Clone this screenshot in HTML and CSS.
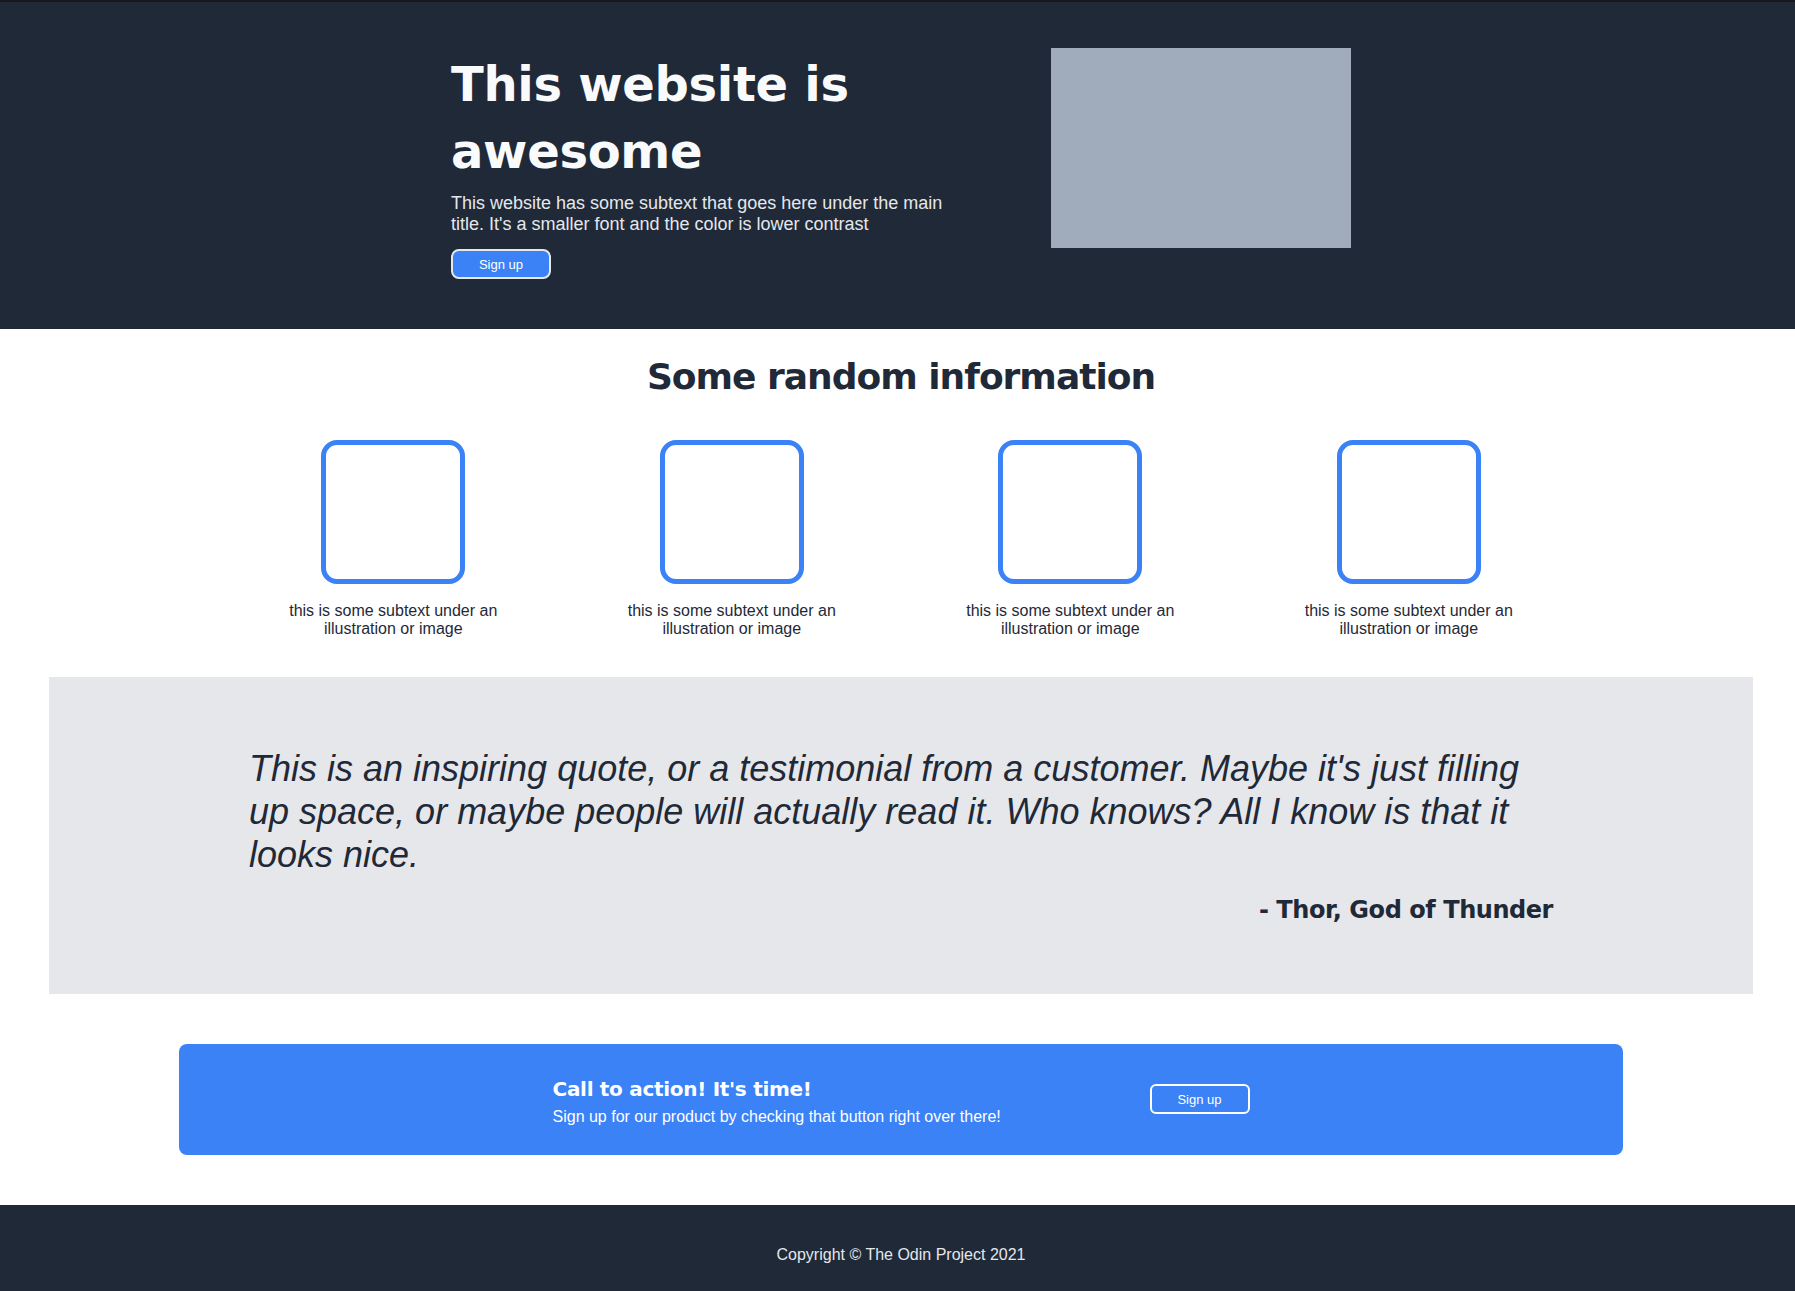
FILE: index.html
```html
<!DOCTYPE html>
<html lang="en">
<head>
<meta charset="utf-8">
<title>Landing page</title>
<link rel="stylesheet" href="styles.css">
</head>
<body>
<header class="hero">
  <div class="hero-inner">
    <div class="hero-text">
      <h1 class="hero-title">This website is awesome</h1>
      <p class="hero-sub">This website has some subtext that goes here under the main title. It's a smaller font and the color is lower contrast</p>
      <button class="btn btn-solid">Sign up</button>
    </div>
    <div class="hero-image"></div>
  </div>
</header>

<section class="info">
  <h2 class="info-title">Some random information</h2>
  <div class="cards">
    <div class="card"><div class="card-box"></div><p>this is some subtext under an illustration or image</p></div>
    <div class="card"><div class="card-box"></div><p>this is some subtext under an illustration or image</p></div>
    <div class="card"><div class="card-box"></div><p>this is some subtext under an illustration or image</p></div>
    <div class="card"><div class="card-box"></div><p>this is some subtext under an illustration or image</p></div>
  </div>
</section>

<section class="quote-section">
  <div class="quote">
    <div class="quote-inner">
      <p class="quote-text">This is an inspiring quote, or a testimonial from a customer. Maybe it's just filling up space, or maybe people will actually read it. Who knows? All I know is that it looks nice.</p>
      <p class="quote-author">- Thor, God of Thunder</p>
    </div>
  </div>
</section>

<section class="cta-section">
  <div class="cta">
    <div class="cta-inner">
      <div class="cta-text">
        <h3 class="cta-title">Call to action! It's time!</h3>
        <p class="cta-sub">Sign up for our product by checking that button right over there!</p>
      </div>
      <button class="btn btn-outline">Sign up</button>
    </div>
  </div>
</section>

<footer class="footer">Copyright © The Odin Project 2021</footer>
</body>
</html>
```

FILE: styles.css
```css
* {
  box-sizing: border-box;
}

body {
  margin: 0;
  font-family: "Liberation Sans", Arial, sans-serif;
  background: #ffffff;
  color: #1f2937;
}

.hero {
  background: #1f2937;
  border-top: 2px solid #17181d;
  height: 329px;
  padding: 46px 0 0 7px;
}

.hero-inner {
  width: 900px;
  margin: 0 auto;
  display: flex;
  justify-content: space-between;
  align-items: flex-start;
}

.hero-text {
  width: 500px;
  margin-top: 3px;
}

.hero-title {
  margin: 0;
  font-family: "DejaVu Sans", sans-serif;
  font-weight: bold;
  font-size: 48px;
  line-height: 67.2px;
  letter-spacing: -0.3px;
  color: #f9fafb;
}

.hero-sub {
  margin: 7.5px 0 0;
  font-size: 18px;
  line-height: 20.7px;
  color: #e5e7eb;
}

.btn {
  display: block;
  width: 100px;
  height: 30px;
  padding: 0;
  font-family: "Liberation Sans", Arial, sans-serif;
  font-size: 13px;
  color: #ffffff;
  cursor: pointer;
}

.btn-solid {
  margin-top: 15px;
  background: #3b82f6;
  border: 2px solid #e5e7eb;
  border-radius: 8px;
}

.hero-image {
  width: 300px;
  height: 200px;
  background: #a0acbb;
}

.info {
  padding: 27px 0 0 7px;
}

.info-title {
  margin: 0;
  text-align: center;
  font-family: "DejaVu Sans", sans-serif;
  font-weight: bold;
  font-size: 36px;
  line-height: 42px;
  letter-spacing: -1px;
  color: #1f2937;
}

.cards {
  display: grid;
  grid-template-columns: repeat(4, 220px);
  column-gap: 118.5px;
  justify-content: center;
  margin-top: 42px;
}

.card {
  display: flex;
  flex-direction: column;
  align-items: center;
}

.card-box {
  width: 144px;
  height: 144px;
  border: 5px solid #3b82f6;
  border-radius: 16px;
}

.card p {
  margin: 18px 0 0;
  font-size: 16px;
  line-height: 18.4px;
  text-align: center;
  color: #1f2937;
}

.quote-section {
  padding: 38px 42px 0 49px;
}

.quote {
  background: #e5e7eb;
  height: 317px;
  padding-top: 70px;
}

.quote-inner {
  width: 1304px;
  margin: 0 auto;
}

.quote-text {
  margin: 0;
  font-style: italic;
  font-size: 36px;
  line-height: 43.2px;
  color: #1f2937;
}

.quote-author {
  margin: 20px 0 0;
  text-align: right;
  font-family: "DejaVu Sans", sans-serif;
  font-weight: bold;
  font-size: 24px;
  line-height: 28px;
  letter-spacing: -0.45px;
  color: #1f2937;
}

.cta-section {
  padding: 50px 0 0 7px;
}

.cta {
  width: 1444px;
  height: 111px;
  margin: 0 auto;
  background: #3b82f6;
  border-radius: 8px;
  display: flex;
  align-items: center;
  justify-content: center;
}

.cta-inner {
  width: 697px;
  display: flex;
  justify-content: space-between;
  align-items: center;
}

.cta-text {
  padding-top: 5px;
}

.cta-title {
  margin: 0;
  font-family: "DejaVu Sans", sans-serif;
  font-weight: bold;
  font-size: 20px;
  line-height: 24px;
  letter-spacing: -0.3px;
  color: #ffffff;
}

.cta-sub {
  margin: 7px 0 0;
  font-size: 16px;
  line-height: 18.4px;
  color: #ffffff;
}

.btn-outline {
  background: transparent;
  border: 2px solid #ffffff;
  border-radius: 6px;
}

.footer {
  margin-top: 50px;
  height: 86px;
  padding: 41px 0 0 7px;
  background: #1f2937;
  color: #e5e7eb;
  text-align: center;
  font-size: 16px;
  line-height: 18.4px;
}
```
